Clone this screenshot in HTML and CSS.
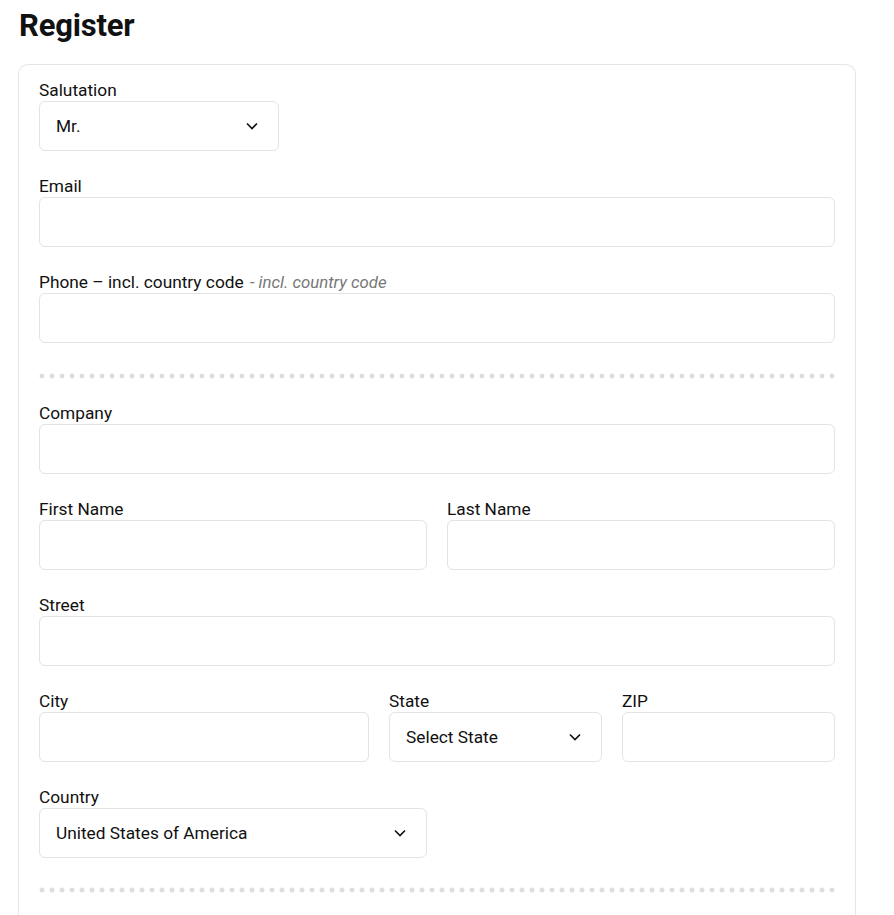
FILE: index.html
```html
<!DOCTYPE html>
<html lang="en">
<head>
<meta charset="utf-8">
<title>Register</title>
<link rel="stylesheet" href="styles.css">
</head>
<body>
<main class="page">
  <h1 class="title">Register</h1>
  <form class="card">
    <div class="field salutation">
      <label class="label">Salutation</label>
      <div class="select"><span>Mr.</span><svg class="chev" width="12" height="8" viewBox="0 0 12 8"><path d="M1 1.5l5 5 5-5" fill="none" stroke="#111" stroke-width="1.6"/></svg></div>
    </div>
    <div class="field">
      <label class="label">Email</label>
      <div class="input"></div>
    </div>
    <div class="field">
      <label class="label">Phone – incl. country code <em class="hint">- incl. country code</em></label>
      <div class="input"></div>
    </div>
    <div class="sep"></div>
    <div class="field">
      <label class="label">Company</label>
      <div class="input"></div>
    </div>
    <div class="row two">
      <div class="field">
        <label class="label">First Name</label>
        <div class="input"></div>
      </div>
      <div class="field">
        <label class="label">Last Name</label>
        <div class="input"></div>
      </div>
    </div>
    <div class="field">
      <label class="label">Street</label>
      <div class="input"></div>
    </div>
    <div class="row three">
      <div class="field">
        <label class="label">City</label>
        <div class="input"></div>
      </div>
      <div class="field">
        <label class="label">State</label>
        <div class="select"><span>Select State</span><svg class="chev" width="12" height="8" viewBox="0 0 12 8"><path d="M1 1.5l5 5 5-5" fill="none" stroke="#111" stroke-width="1.6"/></svg></div>
      </div>
      <div class="field">
        <label class="label">ZIP</label>
        <div class="input"></div>
      </div>
    </div>
    <div class="row two">
      <div class="field">
        <label class="label">Country</label>
        <div class="select"><span>United States of America</span><svg class="chev" width="12" height="8" viewBox="0 0 12 8"><path d="M1 1.5l5 5 5-5" fill="none" stroke="#111" stroke-width="1.6"/></svg></div>
      </div>
    </div>
    <div class="sep last"></div>
  </form>
</main>
</body>
</html>
```
FILE: styles.css
```css
html, body {
  margin: 0;
  padding: 0;
  background: #fff;
}
body {
  font-family: Roboto, "Noto Sans", Arial, sans-serif;
  color: #111;
}
.page {
  padding: 6px 38px 0 18px;
}
.title {
  margin: 0 0 18px 1px;
  font-size: 31px;
  line-height: 40px;
  font-weight: 700;
  letter-spacing: -0.2px;
}
.card {
  border: 1px solid #e6e6e6;
  border-bottom: none;
  border-radius: 10px 10px 0 0;
  padding: 15px 20px 40px 20px;
  display: flex;
  flex-direction: column;
  gap: 25px;
}
.field {
  display: flex;
  flex-direction: column;
  gap: 1px;
}
.label {
  display: block;
  height: 20px;
  font-size: 17.3px;
  line-height: 20px;
}
.hint {
  color: #777;
  font-style: italic;
  font-size: 16.8px;
  line-height: 1;
  margin-left: 2px;
}
.input, .select {
  height: 48px;
  border: 1px solid #e3e3e3;
  border-radius: 6px;
  box-sizing: content-box;
}
.select {
  display: flex;
  align-items: center;
  justify-content: space-between;
  padding: 0 20px 0 16px;
  font-size: 17.3px;
}
.salutation .select {
  width: 202px;
}
.chev {
  display: block;
}
.row {
  display: grid;
  gap: 20px;
}
.row.two {
  grid-template-columns: 1fr 1fr;
}
.row.three {
  grid-template-columns: 330px 1fr 1fr;
}
.sep {
  height: 6px;
  margin: 5px 0 -1px;
  background-image: radial-gradient(circle, #dedede 2.2px, transparent 2.8px);
  background-size: 10px 6px;
  background-position: -2px 0;
}
.sep.last {
  margin-top: 4px;
}
```
